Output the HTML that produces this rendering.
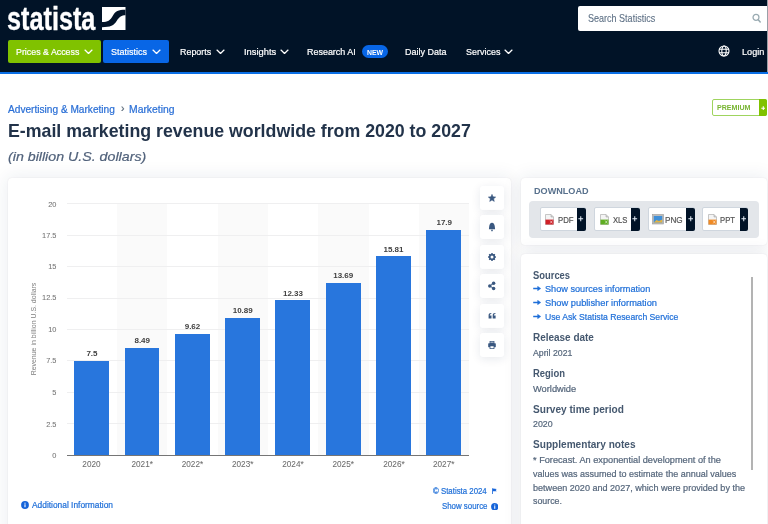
<!DOCTYPE html><html><head><meta charset="utf-8"><style>
*{margin:0;padding:0;box-sizing:border-box}
html,body{width:768px;height:524px;overflow:hidden;background:#fff;font-family:"Liberation Sans",sans-serif}
.a{position:absolute}
.tx{position:absolute;white-space:nowrap;line-height:1}
</style></head><body><div id="wrap" style="position:absolute;left:0;top:0;width:768px;height:524px;overflow:hidden;will-change:transform">
<div class="a" style="left:0;top:0;width:768px;height:72px;background:#011327"></div>
<div class="a" style="left:0;top:71.5px;width:768px;height:2.5px;background:#0a6fe6"></div>
<svg class="a" style="left:102.1px;top:7px" width="23.5" height="23" viewBox="0 0 23.5 23"><rect width="23.5" height="23" fill="#fff"/><path d="M0,15 C6,15 8,13.5 11,8.5 C13.5,4.2 16,2.7 23.5,2.7 L23.5,8.2 C19.5,8.2 17.5,9.5 14.8,13.8 C11.8,18.6 8.5,20.2 0,20.2 Z" fill="#011327"/></svg>
<div class="a" style="left:578.4px;top:6px;width:200px;height:24.5px;background:#fff;border-radius:2px"></div>
<svg class="a" style="left:750px;top:12px" width="14" height="14" viewBox="0 0 14 14"><circle cx="6" cy="5.35" r="2.95" fill="none" stroke="#9aabb2" stroke-width="1.3"/><path d="M8.3,7.7 L10.2,9.9" stroke="#9aabb2" stroke-width="1.5" stroke-linecap="round"/></svg>
<div class="a" style="left:8px;top:40px;width:92.75px;height:23px;background:#80c200;border-radius:2px"></div>
<div class="a" style="left:103.1px;top:40px;width:65.65px;height:23px;background:#0866e6;border-radius:2px"></div>
<svg class="a" style="left:84.20px;top:48.70px" width="9" height="6" viewBox="0 0 9 6"><path d="M1,1.1 L4.5,4.4 L8,1.1" fill="none" stroke="#fff" stroke-width="1.35" stroke-linecap="round" stroke-linejoin="round"/></svg>
<svg class="a" style="left:151.60px;top:48.70px" width="9" height="6" viewBox="0 0 9 6"><path d="M1,1.1 L4.5,4.4 L8,1.1" fill="none" stroke="#fff" stroke-width="1.35" stroke-linecap="round" stroke-linejoin="round"/></svg>
<svg class="a" style="left:215.70px;top:48.70px" width="9" height="6" viewBox="0 0 9 6"><path d="M1,1.1 L4.5,4.4 L8,1.1" fill="none" stroke="#fff" stroke-width="1.35" stroke-linecap="round" stroke-linejoin="round"/></svg>
<svg class="a" style="left:279.90px;top:48.70px" width="9" height="6" viewBox="0 0 9 6"><path d="M1,1.1 L4.5,4.4 L8,1.1" fill="none" stroke="#fff" stroke-width="1.35" stroke-linecap="round" stroke-linejoin="round"/></svg>
<svg class="a" style="left:504.20px;top:48.70px" width="9" height="6" viewBox="0 0 9 6"><path d="M1,1.1 L4.5,4.4 L8,1.1" fill="none" stroke="#fff" stroke-width="1.35" stroke-linecap="round" stroke-linejoin="round"/></svg>
<div class="a" style="left:362px;top:45.2px;width:25.8px;height:12.5px;background:#0866e6;border-radius:7px"></div>
<svg class="a" style="left:717.5px;top:45.2px" width="12" height="12" viewBox="0 0 12 12"><g fill="none" stroke="#fff" stroke-width="1.1"><circle cx="6" cy="6" r="5"/><ellipse cx="6" cy="6" rx="2.2" ry="5"/><path d="M1,4.3H11M1,7.7H11"/></g></svg>
<div class="a" style="left:767px;top:0;width:1px;height:72px;background:#9aa0a8"></div>
<div class="a" style="left:8px;top:177.6px;width:503px;height:400px;background:#fff;border-radius:4px;box-shadow:0 0 1.5px rgba(20,30,60,0.10),0 0 18px 2px rgba(30,50,90,0.08)"></div>
<div class="a" style="left:520.7px;top:177.7px;width:246px;height:67.1px;background:#fff;border-radius:4px;box-shadow:0 0 1.5px rgba(20,30,60,0.10),0 0 18px 2px rgba(30,50,90,0.08)"></div>
<div class="a" style="left:520.7px;top:254.4px;width:246px;height:400px;background:#fff;border-radius:4px;box-shadow:0 0 1.5px rgba(20,30,60,0.10),0 0 18px 2px rgba(30,50,90,0.08)"></div>
<div class="a" style="left:117.01px;top:203.30px;width:50.31px;height:251.80px;background:#fafafa"></div>
<div class="a" style="left:217.64px;top:203.30px;width:50.31px;height:251.80px;background:#fafafa"></div>
<div class="a" style="left:318.26px;top:203.30px;width:50.31px;height:251.80px;background:#fafafa"></div>
<div class="a" style="left:418.89px;top:203.30px;width:50.31px;height:251.80px;background:#fafafa"></div>
<div class="a" style="left:66.70px;top:203.10px;width:402.50px;height:1px;background:#efeff0"></div>
<div class="a" style="left:66.70px;top:234.58px;width:402.50px;height:1px;background:#efeff0"></div>
<div class="a" style="left:66.70px;top:266.05px;width:402.50px;height:1px;background:#efeff0"></div>
<div class="a" style="left:66.70px;top:297.53px;width:402.50px;height:1px;background:#efeff0"></div>
<div class="a" style="left:66.70px;top:329.00px;width:402.50px;height:1px;background:#efeff0"></div>
<div class="a" style="left:66.70px;top:360.48px;width:402.50px;height:1px;background:#efeff0"></div>
<div class="a" style="left:66.70px;top:391.95px;width:402.50px;height:1px;background:#efeff0"></div>
<div class="a" style="left:66.70px;top:423.43px;width:402.50px;height:1px;background:#efeff0"></div>
<div class="a" style="left:74.20px;top:360.68px;width:34.8px;height:94.43px;background:#2876dd"></div>
<div class="a" style="left:124.51px;top:348.21px;width:34.8px;height:106.89px;background:#2876dd"></div>
<div class="a" style="left:174.82px;top:333.98px;width:34.8px;height:121.12px;background:#2876dd"></div>
<div class="a" style="left:225.14px;top:317.99px;width:34.8px;height:137.11px;background:#2876dd"></div>
<div class="a" style="left:275.45px;top:299.87px;width:34.8px;height:155.23px;background:#2876dd"></div>
<div class="a" style="left:325.76px;top:282.74px;width:34.8px;height:172.36px;background:#2876dd"></div>
<div class="a" style="left:376.07px;top:256.05px;width:34.8px;height:199.05px;background:#2876dd"></div>
<div class="a" style="left:426.39px;top:229.74px;width:34.8px;height:225.36px;background:#2876dd"></div>
<div class="a" style="left:66.70px;top:454.50px;width:402.50px;height:1.5px;background:#757575"></div>
<div class="a" style="left:33.9px;top:329.2px;width:0;height:0"><div style="position:absolute;left:0;top:0;transform:translate(-50%,-50%) rotate(-90deg) scaleX(0.915);white-space:nowrap;font-size:7.6px;line-height:1;color:#7f7f7f" id="ytitle">Revenue in billion U.S. dollars</div></div>
<div class="a" style="left:480.2px;top:185.80px;width:24px;height:24px;background:#fff;border-radius:3px;box-shadow:0 2px 10px rgba(20,40,80,0.10)"></div>
<svg class="a" style="left:486.4px;top:191.80px" width="12" height="12" viewBox="0 0 12 12"><path d="M6.00,2.35 L7.03,4.83 L9.71,5.04 L7.66,6.79 L8.29,9.41 L6.00,8.00 L3.71,9.41 L4.34,6.79 L2.29,5.04 L4.97,4.83 Z" fill="#3a5880" stroke="#3a5880" stroke-width="0.5" stroke-linejoin="round"/></svg>
<div class="a" style="left:480.2px;top:215.30px;width:24px;height:24px;background:#fff;border-radius:3px;box-shadow:0 2px 10px rgba(20,40,80,0.10)"></div>
<svg class="a" style="left:486.4px;top:221.30px" width="12" height="12" viewBox="0 0 12 12"><path d="M2.9,8.3 L3.2,5.5 C3.4,3.2 4.5,1.8 6,1.8 C7.5,1.8 8.6,3.2 8.8,5.5 L9.1,8.3 Z" fill="#3a5880"/><ellipse cx="6" cy="9.4" rx="0.8" ry="0.9" fill="#3a5880"/></svg>
<div class="a" style="left:480.2px;top:244.80px;width:24px;height:24px;background:#fff;border-radius:3px;box-shadow:0 2px 10px rgba(20,40,80,0.10)"></div>
<svg class="a" style="left:486.4px;top:250.80px" width="12" height="12" viewBox="0 0 12 12"><g fill="#3a5880"><rect x="5.25" y="2.05" width="1.5" height="1.6" rx="0.3" transform="rotate(0 6 6)"/><rect x="5.25" y="2.05" width="1.5" height="1.6" rx="0.3" transform="rotate(45 6 6)"/><rect x="5.25" y="2.05" width="1.5" height="1.6" rx="0.3" transform="rotate(90 6 6)"/><rect x="5.25" y="2.05" width="1.5" height="1.6" rx="0.3" transform="rotate(135 6 6)"/><rect x="5.25" y="2.05" width="1.5" height="1.6" rx="0.3" transform="rotate(180 6 6)"/><rect x="5.25" y="2.05" width="1.5" height="1.6" rx="0.3" transform="rotate(225 6 6)"/><rect x="5.25" y="2.05" width="1.5" height="1.6" rx="0.3" transform="rotate(270 6 6)"/><rect x="5.25" y="2.05" width="1.5" height="1.6" rx="0.3" transform="rotate(315 6 6)"/></g><circle cx="6" cy="6" r="2.35" fill="none" stroke="#3a5880" stroke-width="1.7"/></svg>
<div class="a" style="left:480.2px;top:274.30px;width:24px;height:24px;background:#fff;border-radius:3px;box-shadow:0 2px 10px rgba(20,40,80,0.10)"></div>
<svg class="a" style="left:486.4px;top:280.30px" width="12" height="12" viewBox="0 0 12 12"><g fill="#3a5880"><circle cx="7.6" cy="3.3" r="1.75"/><circle cx="3.8" cy="5.9" r="1.75"/><circle cx="7.6" cy="8.5" r="1.75"/></g><path d="M7.6,3.3 L3.8,5.9 L7.6,8.5" fill="none" stroke="#3a5880" stroke-width="1"/></svg>
<div class="a" style="left:480.2px;top:303.80px;width:24px;height:24px;background:#fff;border-radius:3px;box-shadow:0 2px 10px rgba(20,40,80,0.10)"></div>
<svg class="a" style="left:486.4px;top:309.80px" width="12" height="12" viewBox="0 0 12 12"><g fill="#3a5880"><path d="M2.6,8.6 V5.3 C2.6,3.9 3.4,3.1 5.3,3.1 V4.1 C4.3,4.15 3.85,4.6 3.8,5.5 H5.5 V8.6 Z"/><path d="M6.7,8.6 V5.3 C6.7,3.9 7.5,3.1 9.4,3.1 V4.1 C8.4,4.15 7.95,4.6 7.9,5.5 H9.6 V8.6 Z"/></g></svg>
<div class="a" style="left:480.2px;top:333.30px;width:24px;height:24px;background:#fff;border-radius:3px;box-shadow:0 2px 10px rgba(20,40,80,0.10)"></div>
<svg class="a" style="left:486.4px;top:339.30px" width="12" height="12" viewBox="0 0 12 12"><path fill-rule="evenodd" d="M3.6,2 H8.4 V4.3 H3.6 Z M4.4,2.8 V3.6 H7.6 V2.8 Z M2.6,4.3 H9.4 Q9.8,4.3 9.8,4.7 V7.8 Q9.8,8.2 9.4,8.2 H8.4 V10 H3.6 V8.2 H2.6 Q2.2,8.2 2.2,7.8 V4.7 Q2.2,4.3 2.6,4.3 Z M4.4,7.2 V9.2 H7.6 V7.2 Z" fill="#3a5880"/></svg>
<svg class="a" style="left:20.60px;top:501.30px" width="8" height="8" viewBox="0 0 8 8"><circle cx="4" cy="4" r="3.9" fill="#1664d9"/><rect x="3.45" y="3.3" width="1.1" height="2.9" fill="#fff"/><rect x="3.45" y="1.7" width="1.1" height="1" fill="#fff"/></svg>
<svg class="a" style="left:490.80px;top:502.60px" width="7.5" height="7.5" viewBox="0 0 8 8"><circle cx="4" cy="4" r="3.9" fill="#1664d9"/><rect x="3.45" y="3.3" width="1.1" height="2.9" fill="#fff"/><rect x="3.45" y="1.7" width="1.1" height="1" fill="#fff"/></svg>
<svg class="a" style="left:492px;top:488.3px" width="5" height="6" viewBox="0 0 5 6"><path d="M0.4,0.3 V6" stroke="#1664d9" stroke-width="0.9"/><path d="M0.8,0.4 L4.8,0.9 L3.6,2.1 L4.8,3.3 L0.8,3.3 Z" fill="#1664d9"/></svg>
<div class="a" style="left:529.3px;top:201.2px;width:229.6px;height:36.4px;background:#e3e6ea;border-radius:4px"></div>
<div class="a" style="left:540.20px;top:207.3px;width:45.50px;height:24.2px;background:#fff;border:1px solid #cfd6de;border-radius:2px"></div>
<div class="a" style="left:576.90px;top:207.8px;width:8.8px;height:23.4px;background:#011327;border-radius:0 2px 2px 0"></div>
<svg class="a" style="left:578.30px;top:216.3px" width="5.5" height="5.5" viewBox="0 0 6 6"><path d="M3,0.4V5.6M0.4,3H5.6" stroke="#e6eef8" stroke-width="1.1"/></svg>
<div class="a" style="left:593.50px;top:207.3px;width:46.30px;height:24.2px;background:#fff;border:1px solid #cfd6de;border-radius:2px"></div>
<div class="a" style="left:631.00px;top:207.8px;width:8.8px;height:23.4px;background:#011327;border-radius:0 2px 2px 0"></div>
<svg class="a" style="left:632.40px;top:216.3px" width="5.5" height="5.5" viewBox="0 0 6 6"><path d="M3,0.4V5.6M0.4,3H5.6" stroke="#e6eef8" stroke-width="1.1"/></svg>
<div class="a" style="left:648.30px;top:207.3px;width:46.70px;height:24.2px;background:#fff;border:1px solid #cfd6de;border-radius:2px"></div>
<div class="a" style="left:686.20px;top:207.8px;width:8.8px;height:23.4px;background:#011327;border-radius:0 2px 2px 0"></div>
<svg class="a" style="left:687.60px;top:216.3px" width="5.5" height="5.5" viewBox="0 0 6 6"><path d="M3,0.4V5.6M0.4,3H5.6" stroke="#e6eef8" stroke-width="1.1"/></svg>
<div class="a" style="left:702.20px;top:207.3px;width:46.10px;height:24.2px;background:#fff;border:1px solid #cfd6de;border-radius:2px"></div>
<div class="a" style="left:739.50px;top:207.8px;width:8.8px;height:23.4px;background:#011327;border-radius:0 2px 2px 0"></div>
<svg class="a" style="left:740.90px;top:216.3px" width="5.5" height="5.5" viewBox="0 0 6 6"><path d="M3,0.4V5.6M0.4,3H5.6" stroke="#e6eef8" stroke-width="1.1"/></svg>
<svg class="a" style="left:545.10px;top:214.10px" width="9" height="11" viewBox="0 0 9 11"><path d="M0.5,0.5 H6 L8.5,3 V10.5 H0.5 Z" fill="#f4f4f4" stroke="#b9b9b9" stroke-width="0.8"/><path d="M6,0.5 V3 H8.5" fill="#d0d0d0" stroke="#a9a9a9" stroke-width="0.6"/><rect x="0.5" y="5.6" width="8" height="4.9" fill="#d01f26"/><path d="M5.2,6.6 L7.4,9.4 M7.4,6.6 L5.2,9.4" stroke="#fff" stroke-width="0.7" opacity="0.8"/></svg>
<svg class="a" style="left:600.30px;top:214.10px" width="9" height="11" viewBox="0 0 9 11"><path d="M0.5,0.5 H6 L8.5,3 V10.5 H0.5 Z" fill="#f4f4f4" stroke="#b9b9b9" stroke-width="0.8"/><path d="M6,0.5 V3 H8.5" fill="#d0d0d0" stroke="#a9a9a9" stroke-width="0.6"/><rect x="0.5" y="5.6" width="8" height="4.9" fill="#5fae22"/><path d="M5.2,6.6 L7.4,9.4 M7.4,6.6 L5.2,9.4" stroke="#fff" stroke-width="0.7" opacity="0.8"/></svg>
<svg class="a" style="left:651.5px;top:214.3px" width="12" height="10.5" viewBox="0 0 12 10.5"><rect x="0.5" y="0.5" width="11" height="9.5" fill="#bbb" stroke="#999" stroke-width="0.6"/><rect x="1.8" y="2" width="8.4" height="6.5" fill="#3f8fd8"/><path d="M1.8,8.5 L4.5,6 L7,7 L10.2,5.5 V8.5 Z" fill="#e3b341"/></svg>
<svg class="a" style="left:708.20px;top:214.10px" width="9" height="11" viewBox="0 0 9 11"><path d="M0.5,0.5 H6 L8.5,3 V10.5 H0.5 Z" fill="#f4f4f4" stroke="#b9b9b9" stroke-width="0.8"/><path d="M6,0.5 V3 H8.5" fill="#d0d0d0" stroke="#a9a9a9" stroke-width="0.6"/><rect x="0.5" y="5.6" width="8" height="4.9" fill="#f08a24"/><path d="M5.2,6.6 L7.4,9.4 M7.4,6.6 L5.2,9.4" stroke="#fff" stroke-width="0.7" opacity="0.8"/></svg>
<div class="a" style="left:712.2px;top:99.2px;width:55px;height:16.6px;border:1.2px solid #9fd45e;border-radius:2px;background:#fff"></div>
<div class="a" style="left:758.6px;top:99.2px;width:8.6px;height:16.6px;background:#80c200;border-radius:0 2px 2px 0"></div>
<svg class="a" style="left:760.7px;top:105.9px" width="4.6" height="4.6" viewBox="0 0 5 5"><path d="M2.5,0.3V4.7M0.3,2.5H4.7" stroke="#fff" stroke-width="1.2"/></svg>
<div class="a" style="left:751px;top:276.7px;width:2.2px;height:193.7px;background:#b3b3b3"></div>
<svg class="a" style="left:533.3px;top:285.90px" width="8" height="5" viewBox="0 0 8 5"><path d="M0.2,2.5H5.5" stroke="#1f6fd8" stroke-width="1.5"/><path d="M4.6,0.2 L7.8,2.5 L4.6,4.8 Z" fill="#1f6fd8" stroke="#1f6fd8" stroke-width="0.4" stroke-linejoin="round"/></svg>
<svg class="a" style="left:533.3px;top:300.00px" width="8" height="5" viewBox="0 0 8 5"><path d="M0.2,2.5H5.5" stroke="#1f6fd8" stroke-width="1.5"/><path d="M4.6,0.2 L7.8,2.5 L4.6,4.8 Z" fill="#1f6fd8" stroke="#1f6fd8" stroke-width="0.4" stroke-linejoin="round"/></svg>
<svg class="a" style="left:533.3px;top:314.10px" width="8" height="5" viewBox="0 0 8 5"><path d="M0.2,2.5H5.5" stroke="#1f6fd8" stroke-width="1.5"/><path d="M4.6,0.2 L7.8,2.5 L4.6,4.8 Z" fill="#1f6fd8" stroke="#1f6fd8" stroke-width="0.4" stroke-linejoin="round"/></svg>
<div class="tx" id="nav1" style="left:16.00px;top:47.02px;font-size:9.90px;font-weight:400;font-style:normal;color:#fff;transform-origin:0 0;transform:scaleX(0.8951);-webkit-text-stroke-width:0.22px;">Prices &amp; Access</div>
<div class="tx" id="nav2" style="left:111.00px;top:47.02px;font-size:9.90px;font-weight:400;font-style:normal;color:#fff;transform-origin:0 0;transform:scaleX(0.9142);-webkit-text-stroke-width:0.22px;">Statistics</div>
<div class="tx" id="nav3" style="left:179.60px;top:47.02px;font-size:9.90px;font-weight:400;font-style:normal;color:#fff;transform-origin:0 0;transform:scaleX(0.9031);-webkit-text-stroke-width:0.22px;">Reports</div>
<div class="tx" id="nav4" style="left:243.60px;top:47.02px;font-size:9.90px;font-weight:400;font-style:normal;color:#fff;transform-origin:0 0;transform:scaleX(0.9466);-webkit-text-stroke-width:0.22px;">Insights</div>
<div class="tx" id="nav5" style="left:307.00px;top:47.02px;font-size:9.90px;font-weight:400;font-style:normal;color:#fff;transform-origin:0 0;transform:scaleX(0.9061);-webkit-text-stroke-width:0.22px;">Research AI</div>
<div class="tx" id="nav6" style="left:405.40px;top:47.02px;font-size:9.90px;font-weight:400;font-style:normal;color:#fff;transform-origin:0 0;transform:scaleX(0.9100);-webkit-text-stroke-width:0.22px;">Daily Data</div>
<div class="tx" id="nav7" style="left:466.00px;top:47.02px;font-size:9.90px;font-weight:400;font-style:normal;color:#fff;transform-origin:0 0;transform:scaleX(0.9076);-webkit-text-stroke-width:0.22px;">Services</div>
<div class="tx" id="nav8" style="left:742.20px;top:47.22px;font-size:9.90px;font-weight:400;font-style:normal;color:#fff;transform-origin:0 0;transform:scaleX(0.9260);-webkit-text-stroke-width:0.22px;">Login</div>
<div class="tx" id="newp" style="left:367.00px;top:48.71px;font-size:7.20px;font-weight:700;font-style:normal;color:#fff;transform-origin:0 0;transform:scaleX(0.9569);-webkit-text-stroke-width:0.00px;">NEW</div>
<div class="tx" id="srch" style="left:588.40px;top:12.63px;font-size:10.60px;font-weight:400;font-style:normal;color:#5c6f84;transform-origin:0 0;transform:scaleX(0.8518);-webkit-text-stroke-width:0.10px;">Search Statistics</div>
<div class="tx" id="logo" style="left:7.00px;top:2.69px;font-size:32.50px;font-weight:700;font-style:normal;color:#fff;transform-origin:0 0;transform:scaleX(0.7768);-webkit-text-stroke-width:0.00px;-webkit-text-stroke:0.35px #fff;">statista</div>
<div class="tx" id="bc1" style="left:8.00px;top:104.03px;font-size:10.60px;font-weight:400;font-style:normal;color:#2a6fd6;transform-origin:0 0;transform:scaleX(0.9554);-webkit-text-stroke-width:0.22px;">Advertising &amp; Marketing</div>
<div class="tx" id="bc2" style="left:121.00px;top:103.03px;font-size:10.60px;font-weight:400;font-style:normal;color:#5b6b7b;transform-origin:0 0;-webkit-text-stroke-width:0.22px;">›</div>
<div class="tx" id="bc3" style="left:129.00px;top:104.03px;font-size:10.60px;font-weight:400;font-style:normal;color:#2a6fd6;transform-origin:0 0;transform:scaleX(0.9787);-webkit-text-stroke-width:0.22px;">Marketing</div>
<div class="tx" id="ttl" style="left:8.00px;top:123.33px;font-size:17.80px;font-weight:700;font-style:normal;color:#22334a;transform-origin:0 0;transform:scaleX(0.9986);-webkit-text-stroke-width:0.00px;">E-mail marketing revenue worldwide from 2020 to 2027</div>
<div class="tx" id="sub" style="left:8.00px;top:150.49px;font-size:13.60px;font-weight:400;font-style:italic;color:#51627b;transform-origin:0 0;transform:scaleX(1.0455);-webkit-text-stroke-width:0.22px;">(in billion U.S. dollars)</div>
<div class="tx" id="prem" style="left:717.40px;top:104.42px;font-size:7.30px;font-weight:700;font-style:normal;color:#78b532;transform-origin:0 0;transform:scaleX(0.9710);-webkit-text-stroke-width:0.00px;">PREMIUM</div>
<div class="tx" id="yl0" style="right:711.60px;top:200.54px;font-size:7.40px;font-weight:400;font-style:normal;color:#737373;transform-origin:100% 0;-webkit-text-stroke-width:0.05px;">20</div>
<div class="tx" id="yl1" style="right:711.60px;top:231.84px;font-size:7.40px;font-weight:400;font-style:normal;color:#737373;transform-origin:100% 0;-webkit-text-stroke-width:0.05px;">17.5</div>
<div class="tx" id="yl2" style="right:711.60px;top:263.14px;font-size:7.40px;font-weight:400;font-style:normal;color:#737373;transform-origin:100% 0;-webkit-text-stroke-width:0.05px;">15</div>
<div class="tx" id="yl3" style="right:711.60px;top:294.44px;font-size:7.40px;font-weight:400;font-style:normal;color:#737373;transform-origin:100% 0;-webkit-text-stroke-width:0.05px;">12.5</div>
<div class="tx" id="yl4" style="right:711.60px;top:325.74px;font-size:7.40px;font-weight:400;font-style:normal;color:#737373;transform-origin:100% 0;-webkit-text-stroke-width:0.05px;">10</div>
<div class="tx" id="yl5" style="right:711.60px;top:357.04px;font-size:7.40px;font-weight:400;font-style:normal;color:#737373;transform-origin:100% 0;-webkit-text-stroke-width:0.05px;">7.5</div>
<div class="tx" id="yl6" style="right:711.60px;top:389.34px;font-size:7.40px;font-weight:400;font-style:normal;color:#737373;transform-origin:100% 0;-webkit-text-stroke-width:0.05px;">5</div>
<div class="tx" id="yl7" style="right:711.60px;top:420.64px;font-size:7.40px;font-weight:400;font-style:normal;color:#737373;transform-origin:100% 0;-webkit-text-stroke-width:0.05px;">2.5</div>
<div class="tx" id="yl8" style="right:711.60px;top:451.94px;font-size:7.40px;font-weight:400;font-style:normal;color:#737373;transform-origin:100% 0;-webkit-text-stroke-width:0.05px;">0</div>
<div class="tx" id="xl0" style="left:91.48px;top:461.46px;font-size:8.20px;font-weight:400;font-style:normal;color:#6c6c6c;transform-origin:50% 0;transform:translateX(-50%);-webkit-text-stroke-width:0.05px;">2020</div>
<div class="tx" id="vl0" style="left:91.98px;top:350.33px;font-size:8.00px;font-weight:700;font-style:normal;color:#404040;transform-origin:50% 0;transform:translateX(-50%);-webkit-text-stroke-width:0.00px;">7.5</div>
<div class="tx" id="xl1" style="left:142.22px;top:461.46px;font-size:8.20px;font-weight:400;font-style:normal;color:#6c6c6c;transform-origin:50% 0;transform:translateX(-50%);-webkit-text-stroke-width:0.05px;">2021*</div>
<div class="tx" id="vl1" style="left:142.22px;top:337.33px;font-size:8.00px;font-weight:700;font-style:normal;color:#404040;transform-origin:50% 0;transform:translateX(-50%);-webkit-text-stroke-width:0.00px;">8.49</div>
<div class="tx" id="xl2" style="left:192.47px;top:461.46px;font-size:8.20px;font-weight:400;font-style:normal;color:#6c6c6c;transform-origin:50% 0;transform:translateX(-50%);-webkit-text-stroke-width:0.05px;">2022*</div>
<div class="tx" id="vl2" style="left:192.47px;top:322.99px;font-size:8.00px;font-weight:700;font-style:normal;color:#404040;transform-origin:50% 0;transform:translateX(-50%);-webkit-text-stroke-width:0.00px;">9.62</div>
<div class="tx" id="xl3" style="left:242.72px;top:461.46px;font-size:8.20px;font-weight:400;font-style:normal;color:#6c6c6c;transform-origin:50% 0;transform:translateX(-50%);-webkit-text-stroke-width:0.05px;">2023*</div>
<div class="tx" id="vl3" style="left:242.72px;top:307.29px;font-size:8.00px;font-weight:700;font-style:normal;color:#404040;transform-origin:50% 0;transform:translateX(-50%);-webkit-text-stroke-width:0.00px;">10.89</div>
<div class="tx" id="xl4" style="left:292.97px;top:461.46px;font-size:8.20px;font-weight:400;font-style:normal;color:#6c6c6c;transform-origin:50% 0;transform:translateX(-50%);-webkit-text-stroke-width:0.05px;">2024*</div>
<div class="tx" id="vl4" style="left:292.97px;top:289.66px;font-size:8.00px;font-weight:700;font-style:normal;color:#404040;transform-origin:50% 0;transform:translateX(-50%);-webkit-text-stroke-width:0.00px;">12.33</div>
<div class="tx" id="xl5" style="left:343.22px;top:461.46px;font-size:8.20px;font-weight:400;font-style:normal;color:#6c6c6c;transform-origin:50% 0;transform:translateX(-50%);-webkit-text-stroke-width:0.05px;">2025*</div>
<div class="tx" id="vl5" style="left:343.22px;top:272.23px;font-size:8.00px;font-weight:700;font-style:normal;color:#404040;transform-origin:50% 0;transform:translateX(-50%);-webkit-text-stroke-width:0.00px;">13.69</div>
<div class="tx" id="xl6" style="left:393.97px;top:461.46px;font-size:8.20px;font-weight:400;font-style:normal;color:#6c6c6c;transform-origin:50% 0;transform:translateX(-50%);-webkit-text-stroke-width:0.05px;">2026*</div>
<div class="tx" id="vl6" style="left:393.47px;top:245.89px;font-size:8.00px;font-weight:700;font-style:normal;color:#404040;transform-origin:50% 0;transform:translateX(-50%);-webkit-text-stroke-width:0.00px;">15.81</div>
<div class="tx" id="xl7" style="left:443.72px;top:461.46px;font-size:8.20px;font-weight:400;font-style:normal;color:#6c6c6c;transform-origin:50% 0;transform:translateX(-50%);-webkit-text-stroke-width:0.05px;">2027*</div>
<div class="tx" id="vl7" style="left:444.22px;top:219.12px;font-size:8.00px;font-weight:700;font-style:normal;color:#404040;transform-origin:50% 0;transform:translateX(-50%);-webkit-text-stroke-width:0.00px;">17.9</div>
<div class="tx" id="ainfo" style="left:32.40px;top:501.18px;font-size:9.00px;font-weight:400;font-style:normal;color:#1f6fd8;transform-origin:0 0;transform:scaleX(0.9303);-webkit-text-stroke-width:0.22px;">Additional Information</div>
<div class="tx" id="copy" style="left:432.80px;top:487.18px;font-size:9.00px;font-weight:400;font-style:normal;color:#1f6fd8;transform-origin:0 0;transform:scaleX(0.8710);-webkit-text-stroke-width:0.22px;">© Statista 2024</div>
<div class="tx" id="shsrc" style="left:442.20px;top:502.38px;font-size:9.00px;font-weight:400;font-style:normal;color:#1f6fd8;transform-origin:0 0;transform:scaleX(0.8739);-webkit-text-stroke-width:0.22px;">Show source</div>
<div class="tx" id="dl" style="left:534.00px;top:187.21px;font-size:9.20px;font-weight:700;font-style:normal;color:#58718d;transform-origin:0 0;transform:scaleX(0.9898);-webkit-text-stroke-width:0.00px;">DOWNLOAD</div>
<div class="tx" id="btn0" style="left:558.00px;top:215.87px;font-size:8.90px;font-weight:400;font-style:normal;color:#555;transform-origin:0 0;transform:scaleX(0.8728);-webkit-text-stroke-width:0.22px;-webkit-text-stroke:0.2px #555;">PDF</div>
<div class="tx" id="btn1" style="left:612.60px;top:215.87px;font-size:8.90px;font-weight:400;font-style:normal;color:#555;transform-origin:0 0;transform:scaleX(0.8621);-webkit-text-stroke-width:0.22px;-webkit-text-stroke:0.2px #555;">XLS</div>
<div class="tx" id="btn2" style="left:665.40px;top:215.87px;font-size:8.90px;font-weight:400;font-style:normal;color:#555;transform-origin:0 0;transform:scaleX(0.9220);-webkit-text-stroke-width:0.22px;-webkit-text-stroke:0.2px #555;">PNG</div>
<div class="tx" id="btn3" style="left:720.40px;top:215.87px;font-size:8.90px;font-weight:400;font-style:normal;color:#555;transform-origin:0 0;transform:scaleX(0.8662);-webkit-text-stroke-width:0.22px;-webkit-text-stroke:0.2px #555;">PPT</div>
<div class="tx" id="h_src" style="left:533.00px;top:271.13px;font-size:10.00px;font-weight:700;font-style:normal;color:#45586f;transform-origin:0 0;transform:scaleX(0.9391);-webkit-text-stroke-width:0.00px;">Sources</div>
<div class="tx" id="lk1" style="left:545.00px;top:284.36px;font-size:9.50px;font-weight:400;font-style:normal;color:#1f6fd8;transform-origin:0 0;transform:scaleX(0.9630);-webkit-text-stroke-width:0.22px;">Show sources information</div>
<div class="tx" id="lk2" style="left:545.00px;top:297.96px;font-size:9.50px;font-weight:400;font-style:normal;color:#1f6fd8;transform-origin:0 0;transform:scaleX(0.9774);-webkit-text-stroke-width:0.22px;">Show publisher information</div>
<div class="tx" id="lk3" style="left:545.00px;top:311.96px;font-size:9.50px;font-weight:400;font-style:normal;color:#1f6fd8;transform-origin:0 0;transform:scaleX(0.9088);-webkit-text-stroke-width:0.22px;">Use Ask Statista Research Service</div>
<div class="tx" id="h_rel" style="left:533.00px;top:332.94px;font-size:10.00px;font-weight:700;font-style:normal;color:#45586f;transform-origin:0 0;transform:scaleX(0.9962);-webkit-text-stroke-width:0.00px;">Release date</div>
<div class="tx" id="v_rel" style="left:533.00px;top:348.53px;font-size:9.30px;font-weight:400;font-style:normal;color:#56677c;transform-origin:0 0;transform:scaleX(0.9400);-webkit-text-stroke-width:0.22px;">April 2021</div>
<div class="tx" id="h_reg" style="left:533.00px;top:368.54px;font-size:10.00px;font-weight:700;font-style:normal;color:#45586f;transform-origin:0 0;transform:scaleX(0.9458);-webkit-text-stroke-width:0.00px;">Region</div>
<div class="tx" id="v_reg" style="left:533.00px;top:384.53px;font-size:9.30px;font-weight:400;font-style:normal;color:#56677c;transform-origin:0 0;transform:scaleX(0.9981);-webkit-text-stroke-width:0.22px;">Worldwide</div>
<div class="tx" id="h_sur" style="left:533.00px;top:404.54px;font-size:10.00px;font-weight:700;font-style:normal;color:#45586f;transform-origin:0 0;transform:scaleX(1.0094);-webkit-text-stroke-width:0.00px;">Survey time period</div>
<div class="tx" id="v_sur" style="left:533.00px;top:419.53px;font-size:9.30px;font-weight:400;font-style:normal;color:#56677c;transform-origin:0 0;transform:scaleX(0.9463);-webkit-text-stroke-width:0.22px;">2020</div>
<div class="tx" id="h_sup" style="left:533.00px;top:440.13px;font-size:10.00px;font-weight:700;font-style:normal;color:#45586f;transform-origin:0 0;transform:scaleX(1.0089);-webkit-text-stroke-width:0.00px;">Supplementary notes</div>
<div class="tx" id="n1" style="left:533.00px;top:455.73px;font-size:9.30px;font-weight:400;font-style:normal;color:#56677c;transform-origin:0 0;transform:scaleX(0.9878);-webkit-text-stroke-width:0.22px;">* Forecast. An exponential development of the</div>
<div class="tx" id="n2" style="left:533.00px;top:469.93px;font-size:9.30px;font-weight:400;font-style:normal;color:#56677c;transform-origin:0 0;transform:scaleX(0.9686);-webkit-text-stroke-width:0.22px;">values was assumed to estimate the annual values</div>
<div class="tx" id="n3" style="left:533.00px;top:483.53px;font-size:9.30px;font-weight:400;font-style:normal;color:#56677c;transform-origin:0 0;transform:scaleX(0.9745);-webkit-text-stroke-width:0.22px;">between 2020 and 2027, which were provided by the</div>
<div class="tx" id="n4" style="left:533.00px;top:497.13px;font-size:9.30px;font-weight:400;font-style:normal;color:#56677c;transform-origin:0 0;transform:scaleX(0.9500);-webkit-text-stroke-width:0.22px;">source.</div>
</div></body></html>
